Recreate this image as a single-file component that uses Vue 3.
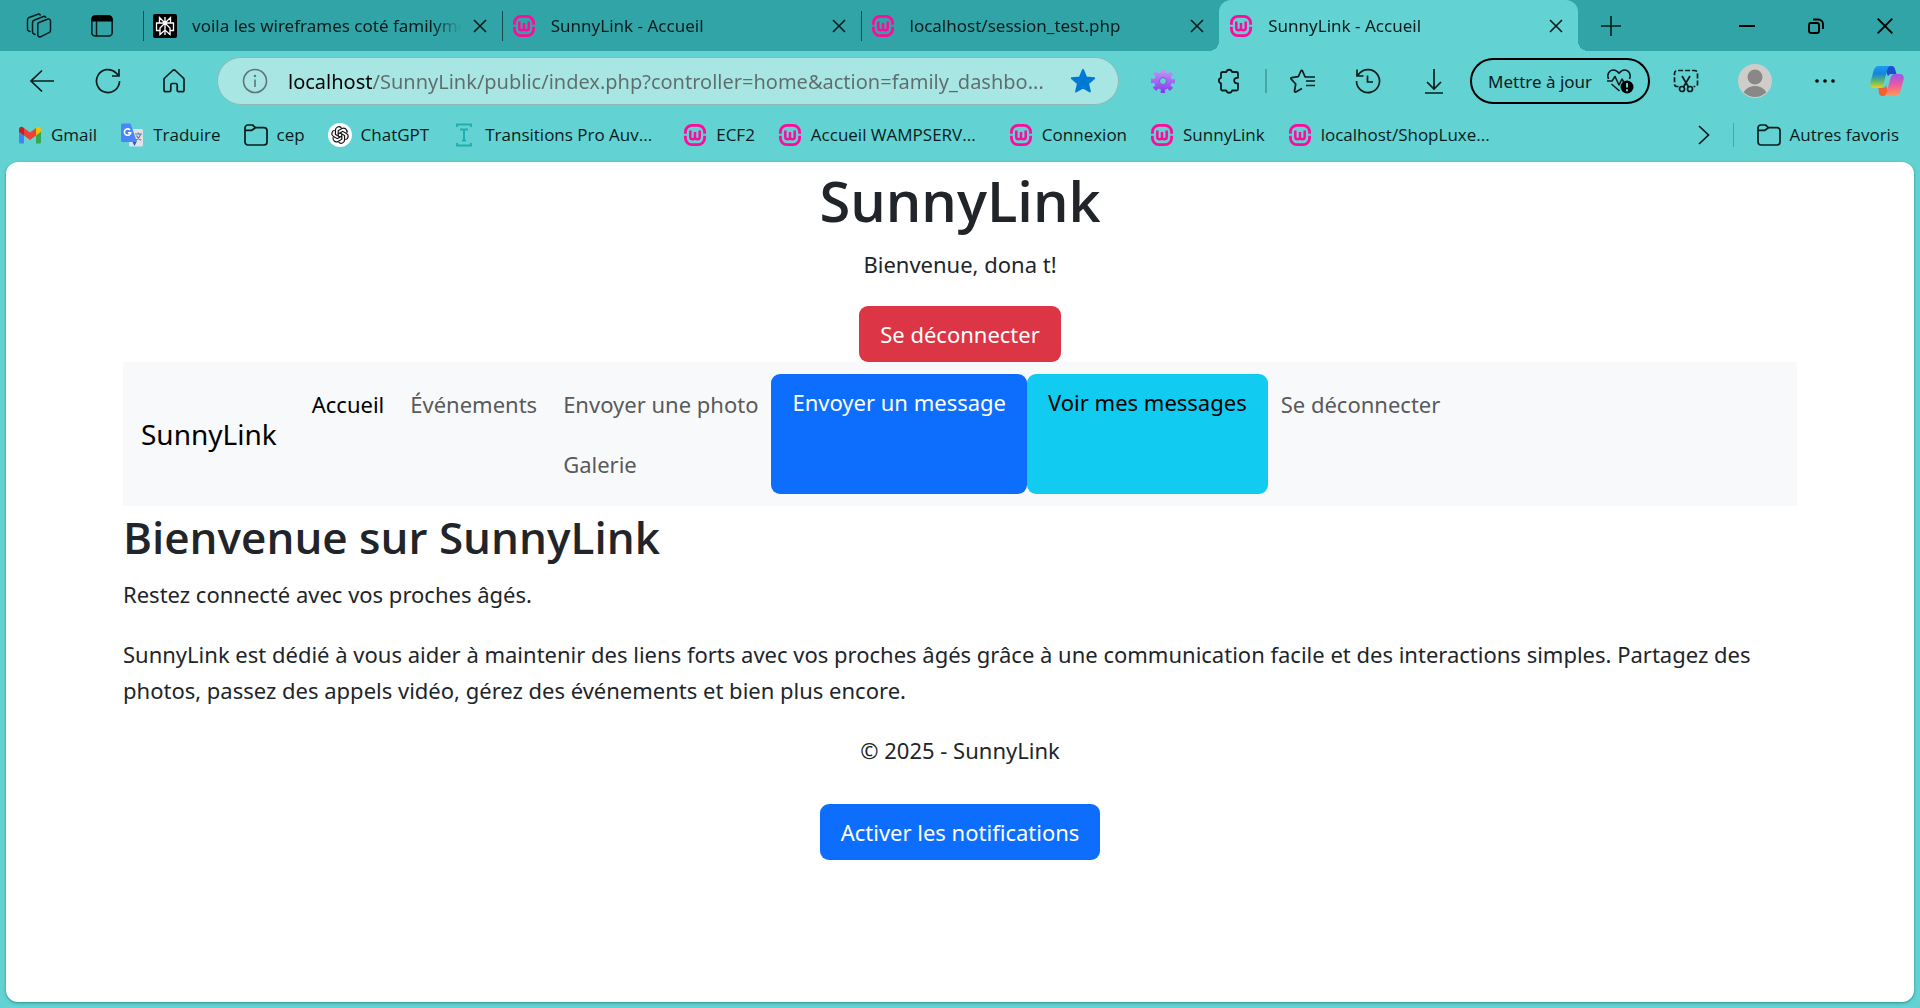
<script setup>
import { ref } from 'vue'

const tabs = [
  { title: 'voila les wireframes coté familyme', icon: 'perplexity', active: false },
  { title: 'SunnyLink - Accueil', icon: 'wamp', active: false },
  { title: 'localhost/session_test.php', icon: 'wamp', active: false },
  { title: 'SunnyLink - Accueil', icon: 'wamp', active: true },
]

const bookmarks = [
  { label: 'Gmail', icon: 'gmail' },
  { label: 'Traduire', icon: 'translate' },
  { label: 'cep', icon: 'folder' },
  { label: 'ChatGPT', icon: 'chatgpt' },
  { label: 'Transitions Pro Auv...', icon: 'transitions', long: true },
  { label: 'ECF2', icon: 'wamp' },
  { label: 'Accueil WAMPSERV...', icon: 'wamp', long: true },
  { label: 'Connexion', icon: 'wamp' },
  { label: 'SunnyLink', icon: 'wamp' },
  { label: 'localhost/ShopLuxe...', icon: 'wamp', long: true },
]

const petalAngles = [0, 60, 120, 180, 240, 300]

const address = ref('localhost/SunnyLink/public/index.php?controller=home&action=family_dashbo...')
</script>

<template>
  <div class="browser">
    <svg class="sprite" aria-hidden="true">
      <symbol id="i-wamp" viewBox="0 0 24 24">
        <g fill="none" stroke="#ff0a9c">
          <path stroke-width="2.8" d="M2.4 10.8V9A6.6 6.6 0 0 1 9 2.4h6A6.6 6.6 0 0 1 21.6 9v1.8M2.4 12.8V15A6.6 6.6 0 0 0 9 21.6h6a6.6 6.6 0 0 0 6.6-6.6v-2.2" />
          <path stroke-width="2.5" d="M7.3 7.5V14c0 1.6.9 2.3 2.3 2.3S12 15.500 12 14V9M12 14c0 1.500 1 2.300 2.400 2.300s2.300-.7 2.300-2.300V7.500" />
        </g>
      </symbol>
      <symbol id="i-perplexity" viewBox="0 0 24 24">
        <rect width="24" height="24" rx="2" fill="#000" />
        <path fill="none" stroke="#fff" stroke-width="1.3" d="M12 3v18M6.5 3.5 12 9l5.5-5.5V9h-11zM7 16.5H3.500V9h17v7.500H17M12 9l-5 5v6.500l5-4.500 5 4.500V14z" />
      </symbol>
      <symbol id="i-gmail" viewBox="0 0 24 24">
        <path fill="#4285f4" d="M1 7v12c0 .8.7 1.500 1.500 1.500H6V10z" />
        <path fill="#34a853" d="M23 7v12c0 .8-.7 1.500-1.500 1.500H18V10z" />
        <path fill="#ea4335" d="M6 12.500V5l6 4.500L18 5v7.500l-6 4.500z" />
        <path fill="#c5221f" d="M1 8V6.500C1 4 3.600 3.200 5.200 4.400L6 5v7.500L1 8.700z" />
        <path fill="#fbbc04" d="M23 8V6.500c0-2.500-2.600-3.300-4.200-2.100L18 5v7.500l5-3.800z" />
      </symbol>
      <symbol id="i-translate" viewBox="0 0 24 24">
        <rect x="9" y="6" width="14" height="17.500" rx="1.500" fill="#dfe3e8" />
        <path fill="#3a52c4" d="M12 18h5l-2.500 5z" />
        <path fill="#4a86f5" d="M2 .5h8.500L17 19H2.500A1.500 1.500 0 0 1 1 17.500V2A1.500 1.500 0 0 1 2 .5z" />
        <path fill="none" stroke="#fff" stroke-width="1.600" d="M10 7a3.200 3.200 0 1 0 .7 2.700H8" />
        <path fill="none" stroke="#64788c" stroke-width="1.100" d="M15 11h7M18.300 9.500V11M20.500 11c-.6 3-2.500 5-4.500 6.200M16.500 12.500c.8 2 2.500 3.800 4.500 4.700" />
      </symbol>
      <symbol id="i-folder" viewBox="0 0 24 24">
        <path fill="none" stroke="#0b1c1c" stroke-width="1.700" stroke-linejoin="round" d="M1 5a3 3 0 0 1 3-3h4.500l3 2.700H20a3 3 0 0 1 3 3V19a3 3 0 0 1-3 3H4a3 3 0 0 1-3-3zM1.300 7.300h6.500l3.700-2.600" />
      </symbol>
      <symbol id="i-chatgpt" viewBox="0 0 24 24">
        <circle cx="12" cy="12" r="12" fill="#fff" />
        <g fill="none" stroke="#111" stroke-width="1.200">
          <path v-for="a in petalAngles" :key="a" d="M10.200 12.900V7.800l3.700-2.200a3.400 3.400 0 0 1 4.900 4.100" :transform="`rotate(${a} 12 12)`" />
        </g>
      </symbol>
      <symbol id="i-transitions" viewBox="0 0 24 24">
        <path fill="none" stroke="#22adb0" stroke-width="2" d="M5 4V1.500h14V4M5 20v2.500h14V20M8 6.500h8M12 6.500v11M10 17.500h4" />
      </symbol>
      <symbol id="i-close" viewBox="0 0 14 14">
        <path fill="none" stroke="#0b1c1c" stroke-width="1.600" d="m1 1 12 12M13 1 1 13" />
      </symbol>
    </svg>

    <header class="tabstrip">
      <div class="tab-tools">
        <button class="icon-btn" aria-label="Espaces de travail">
          <svg width="26" height="26" viewBox="0 0 26 26" fill="none" stroke="#0b1c1c" stroke-width="1.500" stroke-linejoin="round" stroke-linecap="round">
            <path d="M13 9.500 22 6a2 2 0 0 1 2.500 2v9.400a2.500 2.500 0 0 1-1.600 2.300l-8.400 4.100a2 2 0 0 1-2.700-1.900V11.500a2 2 0 0 1 1.200-2z" />
            <path d="M9 21.500 8 21a2 2 0 0 1-1.500-2V9.500a2.500 2.500 0 0 1 1.600-2.300L17.500 3.500a2 2 0 0 1 2.200.7M4 18.500 2.800 18A2 2 0 0 1 1.500 16V6.800a2.500 2.500 0 0 1 1.600-2.300L12 1.200a2 2 0 0 1 2.200.8" />
          </svg>
        </button>
        <button class="icon-btn" aria-label="Menu des onglets">
          <svg width="24" height="24" viewBox="0 0 24 24">
            <rect x="1.800" y="2" width="20.400" height="20" rx="3.500" fill="none" stroke="#0b1c1c" stroke-width="1.600" />
            <path d="M1.500 7.500V5a4 4 0 0 1 4-3.800h13a4 4 0 0 1 4 3.800v2.500z" fill="#000" />
            <path d="M6.500 7v15" stroke="#0b1c1c" stroke-width="1.500" />
          </svg>
        </button>
      </div>
      <nav class="tabs" aria-label="Onglets">
        <div v-for="(tab, i) in tabs" :key="i" class="tab" :class="{ active: tab.active }">
          <svg class="fav"><use :href="'#i-' + tab.icon" /></svg>
          <span class="tab-title">{{ tab.title }}</span>
          <button class="tab-close" aria-label="Fermer l'onglet">
            <svg width="14" height="14"><use href="#i-close" /></svg>
          </button>
        </div>
      </nav>
      <button class="icon-btn" aria-label="Nouvel onglet">
        <svg width="22" height="22" viewBox="0 0 22 22"><path d="M11 1v20M1 11h20" stroke="#0b1c1c" stroke-width="1.600" /></svg>
      </button>
      <div class="window-controls">
        <button class="icon-btn" aria-label="Réduire">
          <svg width="16" height="16" viewBox="0 0 16 16"><path d="M0 8h16" stroke="#000" stroke-width="2" /></svg>
        </button>
        <button class="icon-btn" aria-label="Restaurer">
          <svg width="16" height="16" viewBox="0 0 16 16" fill="none" stroke="#000" stroke-width="1.900"><rect x="1" y="5" width="10" height="10" rx="2" /><path d="M5 1.500h5.500A4.500 4.500 0 0 1 15 6v5" /></svg>
        </button>
        <button class="icon-btn" aria-label="Fermer">
          <svg width="16" height="16" viewBox="0 0 16 16"><path d="m.7.7 14.600 14.600M15.300.7.7 15.300" stroke="#000" stroke-width="1.900" /></svg>
        </button>
      </div>
    </header>

    <div class="toolbar">
      <button class="icon-btn" aria-label="Retour">
        <svg width="26" height="26" viewBox="0 0 26 26" fill="none" stroke="#0b1c1c" stroke-width="1.700"><path d="M25 13H2M13 2.500 2 13l11 10.500" /></svg>
      </button>
      <button class="icon-btn" aria-label="Actualiser">
        <svg width="26" height="26" viewBox="0 0 26 26" fill="none" stroke="#0b1c1c" stroke-width="1.700"><path d="M24.500 13A11.500 11.500 0 1 1 21 4.800l3 3M24 1v7h-7" /></svg>
      </button>
      <button class="icon-btn" aria-label="Accueil du navigateur">
        <svg width="24" height="26" viewBox="0 0 24 26" fill="none" stroke="#0b1c1c" stroke-width="1.700" stroke-linejoin="round"><path d="M2 11.500a2 2 0 0 1 .7-1.500l8-7.500a2 2 0 0 1 2.600 0l8 7.500a2 2 0 0 1 .7 1.500V22a1.700 1.700 0 0 1-1.700 1.700h-3.600A1.500 1.500 0 0 1 15.200 22v-5a1.500 1.500 0 0 0-1.500-1.500h-3.400A1.500 1.500 0 0 0 8.800 17v5a1.500 1.500 0 0 1-1.500 1.700H3.700A1.700 1.700 0 0 1 2 22z" /></svg>
      </button>

      <div class="address">
        <svg width="26" height="26" viewBox="0 0 26 26" fill="none" stroke="#5f7474" stroke-width="1.600"><circle cx="13" cy="13" r="11.500" /><path d="M13 11.500V19" /><circle cx="13" cy="8" r=".5" /></svg>
        <input v-model="address" class="url" type="text" aria-label="Adresse" spellcheck="false" />
        <button class="star" aria-label="Modifier ce favori">
          <svg width="26" height="26" viewBox="0 0 26 26"><path fill="#0078d4" stroke="#0078d4" stroke-width="2" stroke-linejoin="round" d="m13 2 3.100 7.500 8.100.7-6.200 5.300 1.900 8L13 19.300l-6.900 4.200 1.900-8-6.200-5.300 8.100-.7z" /></svg>
        </button>
      </div>

      <button class="icon-btn" aria-label="Extension">
        <svg width="26" height="26" viewBox="0 0 26 26">
          <defs><linearGradient id="gear" gradientUnits="userSpaceOnUse" x1="0" y1="1" x2="0" y2="25"><stop offset="0" stop-color="#c79af6" /><stop offset="1" stop-color="#8436f0" /></linearGradient></defs>
          <circle cx="13" cy="13" r="6.200" fill="none" stroke="url(#gear)" stroke-width="5.600" />
          <circle cx="13" cy="13" r="10" fill="none" stroke="url(#gear)" stroke-width="4" stroke-dasharray="4.200 3.654" stroke-dashoffset="2.100" />
          <circle cx="13" cy="13" r="3.500" fill="none" stroke="#7c5bd8" stroke-width="1" />
        </svg>
      </button>
      <button class="icon-btn" aria-label="Extensions">
        <svg width="26" height="26" viewBox="0 0 26 26" fill="none" stroke="#0b1c1c" stroke-width="1.800" stroke-linejoin="round"><path d="M10.300 4a3 3 0 0 1 5.800 0h4.400A1.500 1.500 0 0 1 22 5.500v4.300h-1a2.800 2.800 0 0 0 0 5.600h1V21a1.500 1.500 0 0 1-1.500 1.500h-4.400a3 3 0 0 1-5.800 0H6.500A1.500 1.500 0 0 1 5 21v-5.600a2.900 2.900 0 0 1 0-5.600V5.500A1.500 1.500 0 0 1 6.500 4z" /></svg>
      </button>
      <span class="divider"></span>
      <button class="icon-btn" aria-label="Favoris">
        <svg width="26" height="26" viewBox="0 0 26 26" fill="none" stroke="#0b1c1c" stroke-width="1.700" stroke-linejoin="round"><path d="M17.500 9 16 8.700 13.500 3c-.4-.8-1.200-.8-1.600 0L9.300 8.700l-6.600.9c-.9.100-1.200 1-.5 1.600L6.700 16l-1.200 7c-.1.800.6 1.300 1.300 1l6.200-3.500M17 13h9M15.500 9H26M17 17.500h9" /></svg>
      </button>
      <button class="icon-btn" aria-label="Historique">
        <svg width="26" height="26" viewBox="0 0 26 26" fill="none" stroke="#0b1c1c" stroke-width="1.700"><path d="M1.500 13A11.500 11.500 0 1 0 4.500 5.300L1.800 8M2 1.500V8h6.500M12.500 7.500V14H18" /></svg>
      </button>
      <button class="icon-btn" aria-label="Téléchargements">
        <svg width="26" height="26" viewBox="0 0 26 26" fill="none" stroke="#0b1c1c" stroke-width="1.700"><path d="M13 1v20M6 14l7 7 7-7M4 25h18" /></svg>
      </button>
      <button class="update">
        <span>Mettre à jour</span>
        <svg width="28" height="26" viewBox="0 0 28 26" fill="none" stroke="#0b1c1c" stroke-width="1.600" stroke-linejoin="round">
          <path d="M2.500 11C.5 6 3.500 2 7.500 2c2.500 0 4 1.300 5.500 3.200C14.500 3.300 16 2 18.500 2c4 0 7 4 5 9M1 13h5l3-4.500 4 8.500 3-6 2 3.500M5.500 16l8 7" />
          <circle cx="21" cy="19" r="6.500" fill="#000" stroke="none" />
          <path d="M21 15v4.500M21 21.300v2" stroke="#62d2d2" stroke-width="2" />
        </svg>
      </button>
      <button class="icon-btn" aria-label="Capture d'écran">
        <svg width="26" height="26" viewBox="0 0 26 26" fill="none" stroke="#0b1c1c" stroke-width="1.700"><path stroke-dasharray="5 2" d="M5.500 18.500H4A2.500 2.500 0 0 1 1.500 16V5.500a3 3 0 0 1 3-3h17a3 3 0 0 1 3 3V16a2.500 2.500 0 0 1-2.500 2.500h-1.500" /><path d="m9 8 6.500 11M17 8l-6.500 11" /><circle cx="9" cy="21" r="2.500" /><circle cx="17" cy="21" r="2.500" /></svg>
      </button>
      <button class="icon-btn profile" aria-label="Profil">
        <svg width="34" height="34" viewBox="0 0 34 34">
          <defs><clipPath id="avatar"><circle cx="17" cy="17" r="16" /></clipPath></defs>
          <circle cx="17" cy="17" r="17" fill="#cfcdca" />
          <g fill="#8a8886" clip-path="url(#avatar)"><circle cx="17" cy="13" r="7.500" /><ellipse cx="17" cy="33" rx="12.500" ry="11" /></g>
        </svg>
      </button>
      <button class="icon-btn menu" aria-label="Paramètres et plus">
        <svg width="20" height="6" viewBox="0 0 20 6"><circle cx="2" cy="3" r="1.800" /><circle cx="10" cy="3" r="1.800" /><circle cx="18" cy="3" r="1.800" /></svg>
      </button>
      <button class="icon-btn" aria-label="Copilot">
        <svg width="34" height="32" viewBox="0 0 34 32">
          <defs>
            <linearGradient id="cop-a" x1="0" y1="0" x2="0" y2="1"><stop offset="0" stop-color="#1d9bf0" /><stop offset=".35" stop-color="#1684e0" /><stop offset=".7" stop-color="#5fb86a" /><stop offset="1" stop-color="#f3cf10" /></linearGradient>
            <linearGradient id="cop-b" x1="0" y1="0" x2="0" y2="1"><stop offset="0" stop-color="#9a55ee" /><stop offset=".5" stop-color="#ee5aa0" /><stop offset="1" stop-color="#ff9a50" /></linearGradient>
          </defs>
          <path fill="#1b4fd0" d="M14 1h7.500c2 0 3 1.200 3.500 3l1.500 5h-5c-2 0-3 1-3.500 2.500z" />
          <path fill="#f4602f" d="M20 31h-7.500c-2 0-3-1.200-3.500-3l-.5-5h4c2 0 3-1 3.500-2.500z" />
          <path fill="url(#cop-a)" d="M9 1h12c-2 0-3 1.500-3.500 3l-4 15c-.7 2.500-2 4-4.500 4H5c-4 0-5.500-2-4.500-6l3-11C4.500 2.500 6 1 9 1z" />
          <path fill="url(#cop-b)" d="M25 31H13c2 0 3-1.500 3.500-3l4-15c.7-2.500 2-4 4.500-4h4c4 0 5.500 2 4.500 6l-3 11c-1 3.500-2.500 5-5.500 5z" />
        </svg>
      </button>
    </div>

    <nav class="bookmarks" aria-label="Barre des favoris">
      <a v-for="b in bookmarks" :key="b.label" href="#" class="bookmark" :class="{ long: b.long }">
        <svg class="fav"><use :href="'#i-' + b.icon" /></svg>
        <span>{{ b.label }}</span>
      </a>
      <button class="icon-btn more" aria-label="Plus de favoris">
        <svg width="12" height="20" viewBox="0 0 12 20"><path fill="none" stroke="#0b1c1c" stroke-width="1.700" d="m1 1 9.500 9L1 19" /></svg>
      </button>
      <span class="divider"></span>
      <a href="#" class="bookmark">
        <svg class="fav"><use href="#i-folder" /></svg>
        <span>Autres favoris</span>
      </a>
    </nav>

    <main class="page">
      <div class="container">
        <header class="site-header">
          <h1>SunnyLink</h1>
          <p>Bienvenue, dona t!</p>
          <a href="#" class="btn danger">Se déconnecter</a>
        </header>

        <nav class="navbar" aria-label="Navigation principale">
          <a href="#" class="brand">SunnyLink</a>
          <ul class="nav-list">
            <li><a href="#" class="nav-link current">Accueil</a></li>
            <li><a href="#" class="nav-link">Événements</a></li>
            <li>
              <a href="#" class="nav-link">Envoyer une photo</a>
              <a href="#" class="nav-link">Galerie</a>
            </li>
            <li class="fill"><a href="#" class="btn primary">Envoyer un message</a></li>
            <li class="fill"><a href="#" class="btn info">Voir mes messages</a></li>
            <li><a href="#" class="nav-link">Se déconnecter</a></li>
          </ul>
        </nav>

        <section>
          <h2>Bienvenue sur SunnyLink</h2>
          <p>Restez connecté avec vos proches âgés.</p>
          <p>SunnyLink est dédié à vous aider à maintenir des liens forts avec vos proches âgés grâce à une communication facile et des interactions simples. Partagez des photos, passez des appels vidéo, gérez des événements et bien plus encore.</p>
        </section>

        <footer class="site-footer">
          <p>© 2025 - SunnyLink</p>
          <button class="btn primary">Activer les notifications</button>
        </footer>
      </div>
    </main>
  </div>
</template>

<style>
body {
  margin: 0;
}
</style>

<style scoped>
.browser {
  display: flex;
  flex-direction: column;
  min-height: 100vh;
  background: #62d2d2;
  color: #0b1c1c;
  font-family: "Segoe UI", "Noto Sans", "Open Sans", sans-serif;
  font-size: 17px;
}
.browser * {
  box-sizing: border-box;
}
.sprite {
  position: absolute;
  width: 0;
  height: 0;
}
button,
input {
  font: inherit;
  color: inherit;
}
button {
  padding: 0;
  border: 0;
  background: none;
}
a {
  color: inherit;
  text-decoration: none;
}
svg {
  flex: none;
}
.icon-btn {
  display: flex;
  flex: none;
  align-items: center;
  justify-content: center;
  width: 66px;
  height: 48px;
}
.fav {
  width: 24px;
  height: 24px;
}
.divider {
  flex: none;
  width: 1px;
  height: 24px;
  background: #4aa5a6;
}

.tabstrip {
  display: flex;
  align-items: center;
  height: 51px;
  background: #31a4a7;
}
.tab-tools {
  display: flex;
  padding: 0 10px 0 7px;
}
.tab-tools .icon-btn {
  width: 63px;
}
.tabs {
  display: flex;
  flex: 0 1 1435px;
  min-width: 0;
  height: 51px;
}
.tab {
  position: relative;
  display: flex;
  flex: 1 1 0;
  align-items: center;
  min-width: 0;
  padding: 0 15px 0 10px;
}
.tab:not(.active)::before {
  content: "";
  position: absolute;
  top: 11px;
  bottom: 10px;
  left: 0;
  width: 1px;
  background: #17494b;
}
.tab.active {
  border-radius: 12px 12px 0 0;
  background: #62d2d2;
}
.tab.active::before,
.tab.active::after {
  content: "";
  position: absolute;
  bottom: 0;
  width: 10px;
  height: 10px;
}
.tab.active::before {
  right: 100%;
  background: radial-gradient(circle at 0 0, transparent 10px, #62d2d2 10px);
}
.tab.active::after {
  left: 100%;
  background: radial-gradient(circle at 100% 0, transparent 10px, #62d2d2 10px);
}
.tab-title {
  flex: 1;
  min-width: 0;
  margin-left: 15px;
  overflow: hidden;
  white-space: nowrap;
  mask-image: linear-gradient(to left, transparent, #000 30px);
}
.tab-close {
  display: flex;
  margin-left: 12px;
}
.window-controls {
  display: flex;
  gap: 3px;
  margin-left: auto;
  padding-right: 2px;
}

.toolbar {
  display: flex;
  align-items: center;
  height: 60px;
  padding-left: 9px;
}
.toolbar .divider {
  width: 2px;
  margin: 0 2px 0 3px;
}
.address {
  display: flex;
  flex: 1;
  align-items: center;
  min-width: 0;
  height: 48px;
  margin: 0 11px 0 10px;
  padding: 0 22px 0 24px;
  border: 1px solid #8fb9b9;
  border-radius: 24px;
  background: #a8e6e4;
}
.url {
  flex: 1;
  min-width: 0;
  height: 34px;
  margin: 0 12px 0 20px;
  padding: 0;
  border: 0;
  background: linear-gradient(90deg, #000 84px, #5f6c6c 84px);
  background-clip: text;
  color: transparent;
  font-size: 20px;
  outline: 0;
}
.star {
  display: flex;
}
.update {
  display: flex;
  flex: none;
  align-items: center;
  justify-content: space-between;
  width: 180px;
  height: 46px;
  margin: 0 3px;
  padding: 0 14px 0 16px;
  border: 2px solid #000;
  border-radius: 23px;
}
.profile {
  margin: 0 8px 0 3px;
}
.menu {
  width: 58px;
}

.bookmarks {
  display: flex;
  align-items: center;
  gap: 23px;
  height: 51px;
  padding: 0 21px 4px 18px;
  font-family: "Segoe UI", "Open Sans", "Noto Sans", sans-serif;
}
.bookmark {
  display: flex;
  flex: none;
  align-items: center;
  gap: 9px;
  white-space: nowrap;
}
.long span {
  min-width: 175px;
}
.more {
  width: 12px;
  margin-left: auto;
}

.page {
  flex: 1;
  margin: 0 6px 6px;
  border-radius: 12px;
  background: #fff;
  box-shadow: 0 1px 3px #2b8f92;
  color: #212529;
  font-size: 22px;
  line-height: 36px;
}
.container {
  max-width: 1710px;
  margin: 0 auto;
  padding: 0 18px;
}
h1,
h2 {
  margin: 0;
  padding: 2px 0 10px;
  font-family: "Segoe UI", "Open Sans", "Noto Sans", sans-serif;
  font-weight: 600;
}
h1 {
  font-size: 56px;
  line-height: 72px;
}
h2 {
  font-size: 44px;
  line-height: 58px;
}
p {
  margin: 0 0 24px;
}
.site-header,
.site-footer {
  display: flex;
  flex-direction: column;
  align-items: center;
}
.btn {
  display: block;
  padding: 10px 21px;
  border-radius: 9px;
  white-space: nowrap;
}
.danger {
  background: #dc3545;
  color: #fff;
}
.primary {
  background: #0d6efd;
  color: #fff;
}
.info {
  background: #12cbf1;
  color: #000;
}
.navbar {
  display: flex;
  align-items: center;
  padding: 12px 18px;
  background: #f8f9fa;
}
.brand {
  margin-right: 22px;
  color: #000;
  font-size: 28px;
}
.nav-list {
  display: flex;
  margin: 0;
  padding: 0;
  list-style: none;
}
.nav-link {
  display: block;
  padding: 12px 13px;
  color: #595a5b;
  white-space: nowrap;
}
.nav-link.current {
  color: #000;
}
.fill {
  display: flex;
}
.site-footer .btn {
  margin-top: 12px;
}
</style>
